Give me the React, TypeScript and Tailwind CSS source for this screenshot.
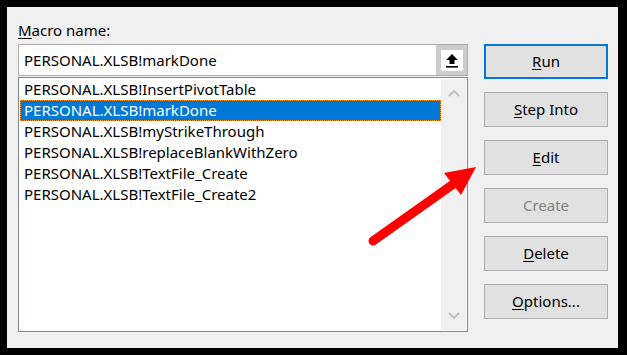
import React from 'react'

const macros = [
  'PERSONAL.XLSB!InsertPivotTable',
  'PERSONAL.XLSB!markDone',
  'PERSONAL.XLSB!myStrikeThrough',
  'PERSONAL.XLSB!replaceBlankWithZero',
  'PERSONAL.XLSB!TextFile_Create',
  'PERSONAL.XLSB!TextFile_Create2',
]

function Btn({ label, u, rest, primary, disabled }: { label?: string; u?: string; rest?: string; primary?: boolean; disabled?: boolean }) {
  return (
    <div
      className={`w-[124px] h-[35px] flex items-center justify-center bg-[#e1e1e1] ${primary ? 'border-2 border-[#0078d7]' : 'border border-[#adadad]'} ${disabled ? 'text-[#838383]' : 'text-black'}`}
    >
      {label ? label : (
        <span>
          <span className="underline underline-offset-2">{u}</span>{rest}
        </span>
      )}
    </div>
  )
}

export default function App() {
  return (
    <div className="relative w-[627px] h-[355px] bg-black pt-[7px] pl-[7px] pr-[9px] pb-[7px] text-[15px] text-black" style={{ fontFamily: '"Noto Sans", "Open Sans", sans-serif' }}>
      <div className="h-full bg-[#f0f0f0] flex">
        {/* left side */}
        <div className="pl-[11px] pt-[12px] w-[461px]">
          <div className="h-[22px] leading-[22px]">
            <span className="underline underline-offset-2">M</span>acro name:
          </div>
          <div className="mt-[3px] h-[32px] w-[450px] border border-[#adadad] bg-white flex items-center">
            <span className="flex-1 pl-[5px]">PERSONAL.XLSB!markDone</span>
            <div className="w-[31px] h-[30px] bg-[#cccccc] flex items-center justify-center">
              <div className="w-[22px] h-[21px] bg-white flex items-center justify-center">
                <svg width="14" height="15" viewBox="0 0 14 15">
                  <path d="M7 1 L13 7 L9.5 7 L9.5 11 L4.5 11 L4.5 7 L1 7 Z" fill="black" />
                  <rect x="1" y="13" width="12" height="1.6" fill="black" />
                </svg>
              </div>
            </div>
          </div>
          <div className="mt-[1px] h-[255px] w-[450px] border border-[#828790] bg-white flex p-[1px]">
            <div className="flex-1 flex flex-col">
              {macros.map((m, i) => (
                <div
                  key={m}
                  className={`h-[21px] leading-[19px] pl-[3px] ${i === 1 ? 'bg-[#0078d7] text-white border border-dotted border-[#ff9a2e]' : 'border border-transparent'}`}
                >
                  {m}
                </div>
              ))}
            </div>
            <div className="w-[25px] bg-[#f0f0f0] flex flex-col items-center justify-between py-[10px]">
              <svg width="12" height="8" viewBox="0 0 12 8">
                <path d="M1 7 L6 2 L11 7" stroke="#c2c2c2" strokeWidth="2" fill="none" />
              </svg>
              <svg width="12" height="8" viewBox="0 0 12 8">
                <path d="M1 1 L6 6 L11 1" stroke="#c2c2c2" strokeWidth="2" fill="none" />
              </svg>
            </div>
          </div>
        </div>
        {/* buttons */}
        <div className="ml-[16px] pt-[37px] flex flex-col gap-[13px]">
          <Btn primary u="R" rest="un" />
          <Btn u="S" rest="tep Into" />
          <Btn u="E" rest="dit" />
          <Btn disabled label="Create" />
          <Btn u="D" rest="elete" />
          <Btn u="O" rest="ptions..." />
        </div>
      </div>
      {/* red annotation arrow */}
      <svg className="absolute left-0 top-0 pointer-events-none" width="627" height="355" viewBox="0 0 627 355">
        <line x1="373" y1="241" x2="452" y2="185" stroke="#ff0000" strokeWidth="9" strokeLinecap="round" />
        <path d="M476 167 L444 173 L461 195 Z" fill="#ff0000" />
      </svg>
    </div>
  )
}
